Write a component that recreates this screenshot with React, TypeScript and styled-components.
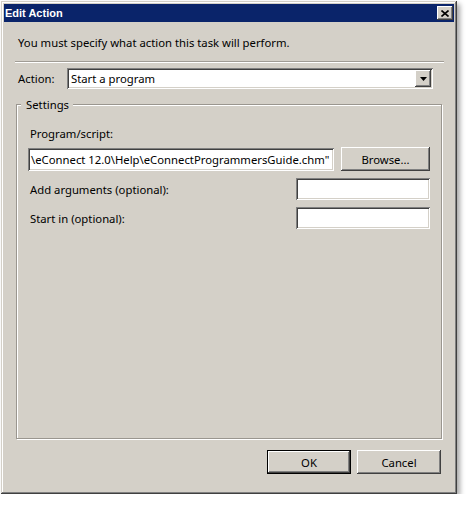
import React from "react";
import styled, { createGlobalStyle } from "styled-components";

const face = "#D4D0C8";
const uiFont = `"Noto Sans", "Liberation Sans", sans-serif`;

const GlobalStyle = createGlobalStyle`
  html, body {
    margin: 0;
    padding: 0;
    background: #fff;
  }
  body {
    font-family: ${uiFont};
    font-size: 11.3px;
    color: #000;
  }
`;

const raised = `
  box-shadow: inset -1px -1px #404040, inset 1px 1px #fff,
    inset -2px -2px #808080, inset 2px 2px ${face};
`;

const sunken = `
  box-shadow: inset 1px 1px #808080, inset -1px -1px #fff,
    inset 2px 2px #404040, inset -2px -2px ${face};
`;

const Page = styled.div`
  padding: 1px 0 0 1px;
`;

const Window = styled.div`
  width: 456px;
  height: 493px;
  box-sizing: border-box;
  padding: 3px;
  background: ${face};
  display: flex;
  flex-direction: column;
  box-shadow: inset -1px -1px #404040, inset 1px 1px ${face},
    inset -2px -2px #808080, inset 2px 2px #fff,
    3px 3px 5px rgba(0, 0, 0, 0.35);
`;

const TitleBar = styled.div`
  height: 18px;
  background: #0a246a;
  display: flex;
  align-items: center;
  justify-content: space-between;
  padding: 0 1px 0 1px;
`;

const Title = styled.span`
  font-family: "Liberation Sans", sans-serif;
  font-weight: bold;
  font-size: 11px;
  color: #fff;
`;

const CloseButton = styled.div`
  width: 16px;
  height: 14px;
  background: ${face};
  display: flex;
  align-items: center;
  justify-content: center;
  ${raised}
`;

const Body = styled.div`
  flex: 1;
  display: flex;
  flex-direction: column;
  padding: 13px 12px 17px 12px;
`;

const Intro = styled.div`
  line-height: 15px;
  padding-left: 2px;
`;

const Separator = styled.div`
  margin: 11px -2px 0 -1px;
  border-top: 1px solid #a09c95;
  border-bottom: 1px solid #fff;
`;

const ActionRow = styled.div`
  margin-top: 5px;
  display: flex;
  align-items: center;
`;

const ActionLabel = styled.span`
  width: 49px;
  padding-left: 2px;
`;

const Combo = styled.div`
  width: 366px;
  height: 21px;
  box-sizing: border-box;
  padding: 2px;
  background: #fff;
  display: flex;
  align-items: center;
  ${sunken}
`;

const ComboText = styled.span`
  flex: 1;
  padding-left: 2px;
`;

const DropButton = styled.div`
  width: 16px;
  height: 17px;
  background: ${face};
  display: flex;
  align-items: center;
  justify-content: center;
  ${raised}
`;

const Group = styled.fieldset`
  flex: 1;
  margin: 8px 0 0 0;
  padding: 0 11px;
  border: 1px solid #9a968f;
  box-shadow: inset 1px 1px #fff, 1px 1px #fff;
  min-width: 0;
`;

const Legend = styled.legend`
  margin-left: -7px;
  padding: 0 4px 0 5px;
  line-height: 15px;
  background: ${face};
`;

const GroupBody = styled.div`
  display: flex;
  flex-direction: column;
  padding-top: 14px;
`;

const FieldLabel = styled.span`
  line-height: 15px;
  padding-left: 2px;
`;

const Row = styled.div<{ $gap: number }>`
  display: flex;
  align-items: center;
  margin-top: ${(p) => p.$gap}px;
  gap: 7px;
`;

const RowLabel = styled(FieldLabel)`
  flex: 1;
`;

const TextBox = styled.div<{ $w?: number; $h: number }>`
  ${(p) => (p.$w ? `width: ${p.$w}px;` : "flex: 1;")}
  height: ${(p) => p.$h}px;
  box-sizing: border-box;
  padding: 2px 2px 2px 3px;
  background: #fff;
  display: flex;
  align-items: center;
  white-space: nowrap;
  overflow: hidden;
  ${sunken}
`;

const Button = styled.div<{ $w: number; $default?: boolean }>`
  width: ${(p) => p.$w}px;
  height: 24px;
  box-sizing: border-box;
  background: ${face};
  display: flex;
  align-items: center;
  justify-content: center;
  ${(p) =>
    p.$default
      ? `box-shadow: inset 0 0 0 1px #000, inset -2px -2px #404040, inset 2px 2px #fff,
          inset -3px -3px #808080;`
      : raised}
`;

const Footer = styled.div`
  margin-top: 11px;
  display: flex;
  justify-content: flex-end;
  gap: 6px;
  padding-right: 1px;
`;

export default function App() {
  return (
    <Page>
      <GlobalStyle />
      <Window>
        <TitleBar>
          <Title>Edit Action</Title>
          <CloseButton>
            <svg width="8" height="7" viewBox="0 0 8 7">
              <path d="M0.5 0.5 L7.5 6.5 M7.5 0.5 L0.5 6.5" stroke="#000" strokeWidth="1.6" />
            </svg>
          </CloseButton>
        </TitleBar>
        <Body>
          <Intro>You must specify what action this task will perform.</Intro>
          <Separator />
          <ActionRow>
            <ActionLabel>Action:</ActionLabel>
            <Combo>
              <ComboText>Start a program</ComboText>
              <DropButton>
                <svg width="7" height="4" viewBox="0 0 7 4">
                  <path d="M0 0 H7 L3.5 4 Z" fill="#000" />
                </svg>
              </DropButton>
            </Combo>
          </ActionRow>
          <Group>
            <Legend>Settings</Legend>
            <GroupBody>
              <FieldLabel>Program/script:</FieldLabel>
              <Row $gap={6}>
                <TextBox $h={23}>\eConnect 12.0\Help\eConnectProgrammersGuide.chm"</TextBox>
                <Button $w={89}>Browse...</Button>
              </Row>
              <Row $gap={7}>
                <RowLabel>Add arguments (optional):</RowLabel>
                <TextBox $w={134} $h={22} />
              </Row>
              <Row $gap={7}>
                <RowLabel>Start in (optional):</RowLabel>
                <TextBox $w={134} $h={22} />
              </Row>
            </GroupBody>
          </Group>
          <Footer>
            <Button $w={84} $default>
              OK
            </Button>
            <Button $w={84}>Cancel</Button>
          </Footer>
        </Body>
      </Window>
    </Page>
  );
}
